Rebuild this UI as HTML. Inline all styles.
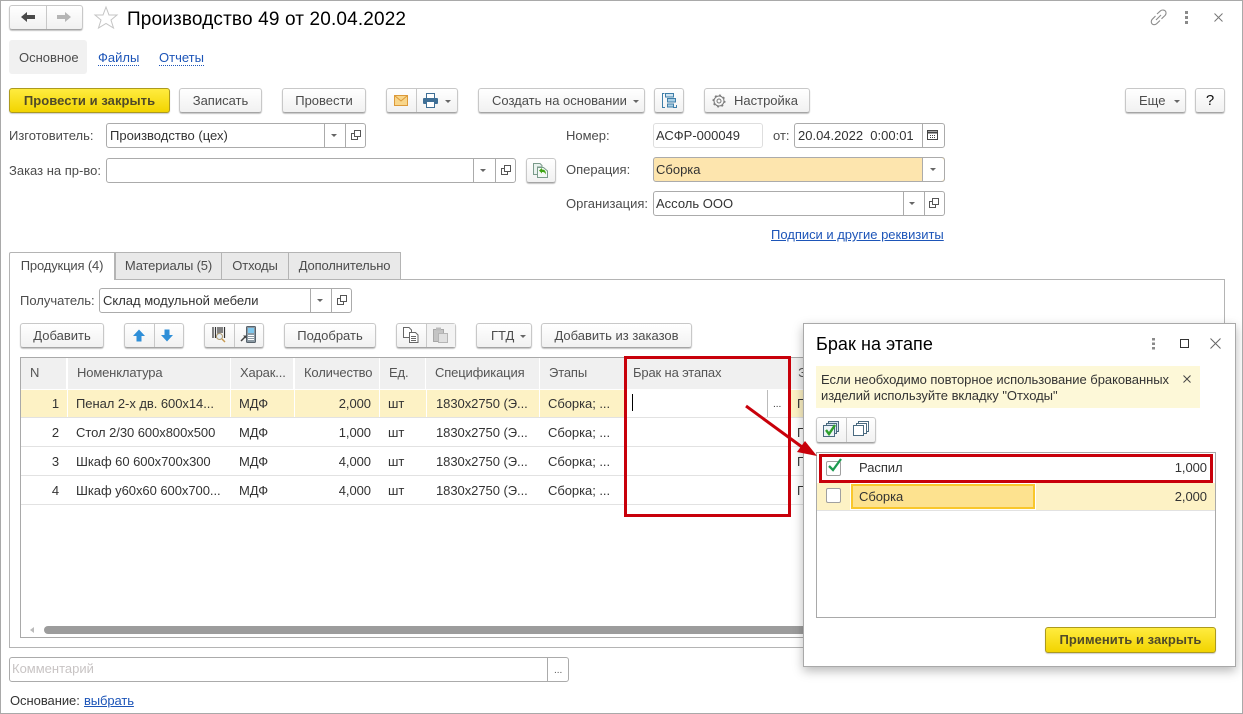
<!DOCTYPE html>
<html lang="ru"><head><meta charset="utf-8"><title>Производство 49</title>
<style>
*{box-sizing:border-box}
html,body{margin:0;padding:0;background:#fff}
#p{position:relative;width:1243px;height:714px;overflow:hidden;background:#fff;border:1px solid #a9a9a9;font:13px "Liberation Sans","Noto Sans CJK SC",sans-serif;color:#4c4c4c}
#r{position:absolute;left:-1px;top:-1px;width:1243px;height:714px}
.t{position:absolute;white-space:nowrap;line-height:16px}
.d{color:#333}
.l{color:#1d55b8;text-decoration:underline}
.ld{color:#1d55b8;border-bottom:1px dotted #1d55b8;line-height:14px}
.b{position:absolute;border:1px solid #c8c8c8;border-bottom-color:#a5a5a5;border-radius:3px;background:linear-gradient(#fff,#f1f1f1);box-shadow:0 1px 1px #c4c4c4;text-align:center;line-height:23px;white-space:nowrap;color:#4c4c4c}
.y{background:linear-gradient(#ffec3f,#f2d400);border-color:#ac9a1e;box-shadow:0 1px 1px #ccc;font-weight:bold;color:#504a28;letter-spacing:.05px}
.f{position:absolute;border:1px solid #ababab;border-radius:3px;background:#fff}
.v{position:absolute;top:0;bottom:0;width:1px;background:#ababab}
.vb{position:absolute;top:0;bottom:0;width:1px;background:#c8c8c8}
.tab{position:absolute;top:252px;height:27px;background:#e9e9e9;border:1px solid #b4b4b4;border-bottom:none;line-height:25px;text-align:center;color:#4c4c4c;letter-spacing:-.15px}
.h{position:absolute;top:358px;height:31px;background:#f0f0f0;line-height:30px;padding-left:9px;white-space:nowrap;color:#555;letter-spacing:-.15px}
.row{position:absolute;height:1px;background:#e2e2e2}
.c{position:absolute;line-height:16px;white-space:nowrap;color:#333;letter-spacing:-.05px}
.ar{position:absolute;width:0;height:0;border-left:3px solid transparent;border-right:3px solid transparent;border-top:3px solid #666}
.e{font-size:10px;line-height:12px}
svg{position:absolute;overflow:visible}
</style></head><body>
<div id="p"><div id="r">

<!-- header -->
<div class="b" style="left:9px;top:5px;width:74px;height:25px"><div class="vb" style="left:36px"></div></div>
<svg style="left:20px;top:11px" width="16" height="12"><path d="M1 6L7 1V4H15V8H7V11Z" fill="#4a4a4a"/></svg>
<svg style="left:56px;top:11px" width="16" height="12"><path d="M15 6L9 1V4H1V8H9V11Z" fill="#b5b5b5"/></svg>
<svg style="left:94px;top:6px" width="24" height="23"><path d="M12 1L15 9H23L17 14L19.500 22L12 17.500L4.500 22L7 14L1 9H9Z" fill="#fff" stroke="#c4c4c4"/></svg>
<div class="t" style="left:127px;top:9px;font-size:19px;letter-spacing:.15px;line-height:22px;color:#000">Производство 49 от 20.04.2022</div>
<svg style="left:1150px;top:9px" width="17" height="17" fill="none" stroke="#8c8c8c" stroke-width="1.100"><path d="M7 5L10.500 1.800C12 .6 14.500 .8 15.500 2.200C16.500 3.600 16 5.500 15 6.500L11.500 9.800"/><path d="M10 11.500L6.500 14.800C5 16 3 16 2 14.800C1 13.600 1 11.500 2.200 10.300L5.500 7"/><path d="M6 11L11 6"/></svg>
<svg style="left:1185px;top:11px" width="4" height="13" fill="#8a8a8a"><rect width="3" height="3"/><rect y="5" width="3" height="3"/><rect y="10" width="3" height="3"/></svg>
<svg style="left:1214px;top:13px" width="9" height="9" stroke="#777" fill="none"><path d="M.5 .5L8.500 8.500M8.500 .5L.5 8.500"/></svg>

<div style="position:absolute;left:9px;top:40px;width:78px;height:34px;background:#f1f1f1;border-radius:3px"></div>
<div class="t" style="left:19px;top:50px">Основное</div>
<div class="t ld" style="left:98px;top:51px">Файлы</div>
<div class="t ld" style="left:159px;top:51px">Отчеты</div>

<!-- command bar -->
<div class="b y" style="left:9px;top:88px;width:161px;height:25px">Провести и закрыть</div>
<div class="b" style="left:179px;top:88px;width:83px;height:25px">Записать</div>
<div class="b" style="left:282px;top:88px;width:84px;height:25px">Провести</div>
<div class="b" style="left:386px;top:88px;width:72px;height:25px"><div class="vb" style="left:29px"></div></div>
<svg style="left:394px;top:95px" width="14" height="11"><rect x=".5" y=".5" width="13" height="10" fill="#f8d68b" stroke="#dc9a3a"/><path d="M.5 .5L7 6L13.500 .5" stroke="#dc9a3a" fill="none"/></svg>
<svg style="left:423px;top:93px" width="15" height="15"><rect x="3.500" y=".5" width="8" height="5" fill="#fff" stroke="#3f6f96"/><rect x="0" y="5" width="15" height="6" rx="1" fill="#3f6f96"/><rect x="3.500" y="8.500" width="8" height="6" fill="#fff" stroke="#3f6f96"/></svg>
<div class="ar" style="left:445px;top:100px"></div>
<div class="b" style="left:478px;top:88px;width:167px;height:25px;text-align:left;padding-left:13px">Создать на основании</div>
<div class="ar" style="left:633px;top:100px"></div>
<div class="b" style="left:654px;top:88px;width:30px;height:25px"></div>
<svg style="left:662px;top:93px" width="15" height="15" fill="none" stroke="#3f7ea8"><path d="M2.500 .5H.5V14.500H3M11 14.500H14.500V12"/><rect x="3.500" y=".5" width="8" height="3.500" fill="#cfe4f1"/><rect x="5.500" y="5.500" width="8" height="3.500" fill="#a8cfe6"/><rect x="5.500" y="11" width="6" height="3" fill="#a8cfe6"/></svg>
<div class="b" style="left:704px;top:88px;width:106px;height:25px;text-align:left;padding-left:29px">Настройка</div>
<svg style="left:712px;top:94px" width="14" height="14" fill="none" stroke="#777"><circle cx="7" cy="7" r="2"/><circle cx="7" cy="7" r="5"/><circle cx="7" cy="7" r="6" stroke-dasharray="2 2.700"/></svg>
<div class="b" style="left:1125px;top:88px;width:61px;height:25px;text-align:left;padding-left:13px">Еще</div>
<div class="ar" style="left:1174px;top:100px"></div>
<div class="b" style="left:1195px;top:88px;width:30px;height:25px;color:#111;font-size:15px">?</div>

<!-- fields -->
<div class="t" style="left:9px;top:128px">Изготовитель:</div>
<div class="f" style="left:106px;top:123px;width:260px;height:25px"><div class="v" style="left:217px"></div><div class="v" style="left:238px"></div></div>
<div class="t d" style="left:110px;top:128px">Производство (цех)</div>
<div class="ar" style="left:331px;top:134px"></div>
<svg style="left:351px;top:130px" width="10" height="10" fill="none" stroke="#555"><rect x="3.500" y=".5" width="6" height="6"/><path d="M3 3.500H.5V9.500H6.500V7"/></svg>

<div class="t" style="left:9px;top:163px">Заказ на пр-во:</div>
<div class="f" style="left:106px;top:158px;width:410px;height:25px"><div class="v" style="left:366px"></div><div class="v" style="left:388px"></div></div>
<div class="ar" style="left:480px;top:169px"></div>
<svg style="left:501px;top:165px" width="10" height="10" fill="none" stroke="#555"><rect x="3.500" y=".5" width="6" height="6"/><path d="M3 3.500H.5V9.500H6.500V7"/></svg>
<div class="b" style="left:526px;top:158px;width:30px;height:25px"></div>
<svg style="left:533px;top:163px" width="16" height="15"><path d="M.5 .5H7L9 2.500V4H4.500V11.500H.5Z" fill="#e9f2ee" stroke="#7a9a8a"/><path d="M4.500 4.500H10.500L14.500 8V14.500H4.500Z" fill="#f3f8f5" stroke="#7a9a8a"/><path d="M6 7.500L9 5V6.500C12 6.500 13 8.500 13 11.500C12 9.500 11 9 9 9V10.500Z" fill="#3fa512"/></svg>

<div class="t" style="left:566px;top:128px">Номер:</div>
<div class="f" style="left:653px;top:123px;width:110px;height:25px;border-color:#dedede"></div>
<div class="t d" style="left:656px;top:128px">АСФР-000049</div>
<div class="t" style="left:773px;top:128px">от:</div>
<div class="f" style="left:794px;top:123px;width:151px;height:25px"><div class="v" style="left:127px"></div></div>
<div class="t d" style="left:798px;top:128px">20.04.2022&nbsp;&nbsp;0:00:01</div>
<svg style="left:927px;top:129px" width="12" height="12" fill="none" stroke="#444"><rect x=".5" y="1.500" width="10" height="9"/><path d="M.5 3.500H10.500" stroke-width="2"/><path d="M3 6.500h1M5 6.500h1M7 6.500h1M3 8.500h1M5 8.500h1M7 8.500h1" /></svg>

<div class="t" style="left:566px;top:162px">Операция:</div>
<div class="f" style="left:653px;top:157px;width:292px;height:25px;background:#fde5ae"><div class="v" style="left:268px;background:#ababab"></div><div style="position:absolute;left:269px;top:0;right:0;bottom:0;background:#fff;border-radius:0 3px 3px 0"></div></div>
<div class="t d" style="left:656px;top:162px">Сборка</div>
<div class="ar" style="left:930px;top:168px"></div>

<div class="t" style="left:566px;top:196px">Организация:</div>
<div class="f" style="left:653px;top:191px;width:292px;height:25px"><div class="v" style="left:249px"></div><div class="v" style="left:270px"></div></div>
<div class="t d" style="left:656px;top:196px">Ассоль ООО</div>
<div class="ar" style="left:909px;top:202px"></div>
<svg style="left:929px;top:198px" width="10" height="10" fill="none" stroke="#555"><rect x="3.500" y=".5" width="6" height="6"/><path d="M3 3.500H.5V9.500H6.500V7"/></svg>
<div class="t l" style="left:771px;top:227px;letter-spacing:-.02px">Подписи и другие реквизиты</div>

<!-- tabs -->
<div style="position:absolute;left:9px;top:279px;width:1216px;height:369px;border:1px solid #b4b4b4;background:#fff"></div>
<div class="tab" style="left:115px;width:107px">Материалы (5)</div>
<div class="tab" style="left:221px;width:68px">Отходы</div>
<div class="tab" style="left:288px;width:113px">Дополнительно</div>
<div class="tab" style="left:9px;width:106px;height:28px;background:#fff;border-radius:2px 0 0 0">Продукция (4)</div>

<div class="t" style="left:20px;top:293px">Получатель:</div>
<div class="f" style="left:99px;top:288px;width:253px;height:25px"><div class="v" style="left:210px"></div><div class="v" style="left:231px"></div></div>
<div class="t d" style="left:103px;top:293px">Склад модульной мебели</div>
<div class="ar" style="left:317px;top:299px"></div>
<svg style="left:337px;top:295px" width="10" height="10" fill="none" stroke="#555"><rect x="3.500" y=".5" width="6" height="6"/><path d="M3 3.500H.5V9.500H6.500V7"/></svg>

<div class="b" style="left:20px;top:323px;width:84px;height:25px">Добавить</div>
<div class="b" style="left:124px;top:323px;width:60px;height:25px"><div class="vb" style="left:29px"></div></div>
<svg style="left:133px;top:329px" width="12" height="13"><path d="M6 .5L12 7H8.500V12.500H3.500V7H0Z" fill="#2f8fd8"/></svg>
<svg style="left:161px;top:329px" width="12" height="13"><path d="M6 12.500L12 6H8.500V.5H3.500V6H0Z" fill="#2f8fd8"/></svg>
<div class="b" style="left:204px;top:323px;width:60px;height:25px"><div class="vb" style="left:29px"></div></div>
<svg style="left:212px;top:327px" width="14" height="16"><path d="M1 0V11M3.500 0V11M6 0V8M8 0V6M10 0V6M12.500 0V11" stroke="#333" stroke-width="1.200"/><circle cx="7.500" cy="9.500" r="3" fill="#e6eef4" stroke="#b09a70"/><path d="M10 12L13 15" stroke="#c89a50" stroke-width="1.500"/></svg>
<svg style="left:240px;top:326px" width="16" height="18"><rect x="6.500" y=".5" width="9" height="16" rx="1" fill="#8c9aa4" stroke="#56626c"/><rect x="8" y="2" width="6" height="5" fill="#7fc8ee"/><path d="M8 9.500h6M8 11.500h6M8 13.500h6" stroke="#fff"/><path d="M1 15L6 10" stroke="#444" stroke-width="1.500"/><path d="M3 9.500H6.500V13Z" fill="#444"/></svg>
<div class="b" style="left:284px;top:323px;width:92px;height:25px">Подобрать</div>
<div class="b" style="left:396px;top:323px;width:60px;height:25px"><div class="vb" style="left:29px"></div><div style="position:absolute;left:30px;top:0;right:0;bottom:0;background:#f3f3f3"></div></div>
<svg style="left:403px;top:327px" width="16" height="16" fill="#fff" stroke="#666"><path d="M.5 .5H6L8.500 3V10.500H.5Z"/><path d="M6.500 5.500H12.500L15 8V15.500H6.500Z"/><path d="M8 9.500H13M8 11.500H13M8 13.500H13" fill="none"/></svg>
<svg style="left:433px;top:327px" width="15" height="16"><rect x=".5" y="2.500" width="10" height="12" fill="#c4c4c4" stroke="#a8a8a8"/><rect x="3" y=".5" width="5" height="3" fill="#bbb"/><rect x="5.500" y="6.500" width="9" height="9" fill="#e0e0e0" stroke="#b5b5b5"/></svg>
<div class="b" style="left:476px;top:323px;width:56px;height:25px;text-align:left;padding-left:14px">ГТД</div>
<div class="ar" style="left:520px;top:335px"></div>
<div class="b" style="left:541px;top:323px;width:151px;height:25px">Добавить из заказов</div>

<!-- table -->
<div style="position:absolute;left:20px;top:357px;width:1194px;height:281px;border:1px solid #a9a9a9;background:#fff"></div>
<div class="h" style="left:21px;width:45px">N</div>
<div class="h" style="left:68px;width:162px">Номенклатура</div>
<div class="h" style="left:231px;width:62px">Харак...</div>
<div class="h" style="left:295px;width:84px">Количество</div>
<div class="h" style="left:380px;width:45px">Ед.</div>
<div class="h" style="left:426px;width:113px">Спецификация</div>
<div class="h" style="left:540px;width:84px">Этапы</div>
<div class="h" style="left:624px;width:164px">Брак на этапах</div>
<div class="h" style="left:789px;width:425px">Этап</div>

<div style="position:absolute;left:21px;top:390px;width:603px;height:27px;background:#fdf2c5"></div>
<div style="position:absolute;left:67px;top:390px;width:1px;height:27px;background:#fff"></div>
<div style="position:absolute;left:230px;top:390px;width:1px;height:27px;background:#fff"></div>
<div style="position:absolute;left:294px;top:390px;width:1px;height:27px;background:#fff"></div>
<div style="position:absolute;left:379px;top:390px;width:1px;height:27px;background:#fff"></div>
<div style="position:absolute;left:426px;top:390px;width:1px;height:27px;background:#fff"></div>
<div style="position:absolute;left:539px;top:390px;width:1px;height:27px;background:#fff"></div>
<div style="position:absolute;left:789px;top:390px;width:20px;height:27px;background:#fdf2c5"></div>
<div class="row" style="left:21px;top:417px;width:800px"></div>
<div class="row" style="left:21px;top:446px;width:800px"></div>
<div class="row" style="left:21px;top:475px;width:800px"></div>
<div class="row" style="left:21px;top:504px;width:800px"></div>
<div style="position:absolute;left:767px;top:390px;width:1px;height:27px;background:#bbb"></div>
<div class="c e" style="left:773px;top:399px">...</div>
<div style="position:absolute;left:632px;top:394px;width:1px;height:17px;background:#000"></div>

<div class="c" style="left:30px;width:29px;text-align:right;top:396px">1</div>
<div class="c" style="left:76px;top:396px">Пенал 2-х дв. 600х14...</div>
<div class="c" style="left:239px;top:396px">МДФ</div>
<div class="c" style="left:295px;width:76px;text-align:right;top:396px">2,000</div>
<div class="c" style="left:388px;top:396px">шт</div>
<div class="c" style="left:436px;top:396px">1830х2750 (Э...</div>
<div class="c" style="left:548px;top:396px">Сборка; ...</div>
<div class="c" style="left:797px;top:396px">П</div>

<div class="c" style="left:30px;width:29px;text-align:right;top:425px">2</div>
<div class="c" style="left:76px;top:425px">Стол 2/30 600х800х500</div>
<div class="c" style="left:239px;top:425px">МДФ</div>
<div class="c" style="left:295px;width:76px;text-align:right;top:425px">1,000</div>
<div class="c" style="left:388px;top:425px">шт</div>
<div class="c" style="left:436px;top:425px">1830х2750 (Э...</div>
<div class="c" style="left:548px;top:425px">Сборка; ...</div>
<div class="c" style="left:797px;top:425px">П</div>

<div class="c" style="left:30px;width:29px;text-align:right;top:454px">3</div>
<div class="c" style="left:76px;top:454px">Шкаф 60 600х700х300</div>
<div class="c" style="left:239px;top:454px">МДФ</div>
<div class="c" style="left:295px;width:76px;text-align:right;top:454px">4,000</div>
<div class="c" style="left:388px;top:454px">шт</div>
<div class="c" style="left:436px;top:454px">1830х2750 (Э...</div>
<div class="c" style="left:548px;top:454px">Сборка; ...</div>
<div class="c" style="left:797px;top:454px">П</div>

<div class="c" style="left:30px;width:29px;text-align:right;top:483px">4</div>
<div class="c" style="left:76px;top:483px">Шкаф у60х60 600х700...</div>
<div class="c" style="left:239px;top:483px">МДФ</div>
<div class="c" style="left:295px;width:76px;text-align:right;top:483px">4,000</div>
<div class="c" style="left:388px;top:483px">шт</div>
<div class="c" style="left:436px;top:483px">1830х2750 (Э...</div>
<div class="c" style="left:548px;top:483px">Сборка; ...</div>
<div class="c" style="left:797px;top:483px">П</div>

<!-- scrollbar -->
<svg style="left:30px;top:627px" width="5" height="7"><path d="M4 0V6L0 3Z" fill="#bbb"/></svg>
<div style="position:absolute;left:44px;top:626px;width:770px;height:8px;border-radius:4px;background:#9c9c9c"></div>

<!-- footer -->
<div class="f" style="left:9px;top:657px;width:560px;height:25px"><div class="v" style="left:537px"></div></div>
<div class="t" style="left:12px;top:661px;color:#c8c4c4">Комментарий</div>
<div class="c e" style="left:554px;top:665px;color:#555">...</div>
<div class="t d" style="left:10px;top:693px;letter-spacing:-.05px">Основание:</div>
<div class="t l" style="left:84px;top:693px;letter-spacing:-.1px">выбрать</div>

<!-- red box -->
<div style="position:absolute;left:624px;top:356px;width:167px;height:161px;border:3px solid #c8000a"></div>

<!-- modal -->
<div style="position:absolute;left:803px;top:323px;width:433px;height:344px;background:#fff;border:1px solid #a9a9a9;box-shadow:0 4px 10px rgba(0,0,0,.28)"></div>
<div class="t" style="left:816px;top:333px;font-size:18px;letter-spacing:.05px;line-height:22px;color:#000">Брак на этапе</div>
<svg style="left:1152px;top:338px" width="4" height="12" fill="#8a8a8a"><rect width="3" height="2.500"/><rect y="4.500" width="3" height="2.500"/><rect y="9" width="3" height="2.500"/></svg>
<svg style="left:1180px;top:339px" width="10" height="10" fill="none" stroke="#333"><rect x=".5" y=".5" width="8" height="8"/></svg>
<svg style="left:1210px;top:338px" width="11" height="11" fill="none" stroke="#666"><path d="M.5 .5L10.500 10.500M10.500 .5L.5 10.500"/></svg>

<div style="position:absolute;left:816px;top:366px;width:384px;height:42px;background:#fdf8d8"></div>
<div class="t d" style="left:821px;top:372px;letter-spacing:-.04px">Если необходимо повторное использование бракованных</div>
<div class="t d" style="left:821px;top:388px;letter-spacing:-.04px">изделий используйте вкладку "Отходы"</div>
<svg style="left:1183px;top:375px" width="8" height="8" fill="none" stroke="#444"><path d="M.5 .5L7.500 7.500M7.500 .5L.5 7.500"/></svg>

<div class="b" style="left:816px;top:417px;width:60px;height:26px"><div class="vb" style="left:29px"></div></div>
<svg style="left:823px;top:421px" width="17" height="16" fill="#d8e6f0" stroke="#4a6a80"><rect x="5.500" y=".5" width="10" height="10"/><rect x="3.500" y="2.500" width="10" height="10"/><rect x=".5" y="4.500" width="11" height="11" fill="#eef4f8"/><path d="M3 9L6 13L12 4" fill="none" stroke="#2ea02e" stroke-width="2.400"/></svg>
<svg style="left:853px;top:421px" width="16" height="16" fill="#fff" stroke="#4a6a80"><rect x="5.500" y=".5" width="10" height="10"/><rect x="3.500" y="2.500" width="10" height="10"/><rect x=".5" y="4.500" width="10" height="10"/></svg>

<div style="position:absolute;left:816px;top:452px;width:400px;height:166px;border:1px solid #a9a9a9;background:#fff"></div>
<div style="position:absolute;left:817px;top:483px;width:398px;height:27px;background:#fdf2c5"></div>
<div style="position:absolute;left:817px;top:510px;width:398px;height:1px;background:#e2e2e2"></div>
<div style="position:absolute;left:851px;top:484px;width:184px;height:25px;background:#fde28f;border:2px solid #f9c72c;outline:1px solid #fff"></div>
<div style="position:absolute;left:826px;top:461px;width:15px;height:15px;border:1px solid #a0a0a0;border-radius:2px;background:#fff"></div>
<svg style="left:828px;top:458px" width="15" height="14" fill="none" stroke="#1d9a50" stroke-width="2.300"><path d="M1 8L5 12L13 1"/></svg>
<div style="position:absolute;left:826px;top:488px;width:15px;height:15px;border:1px solid #a0a0a0;border-radius:2px;background:#fff"></div>
<div class="c" style="left:859px;top:460px">Распил</div>
<div class="c" style="left:1100px;width:107px;text-align:right;top:460px">1,000</div>
<div class="c" style="left:859px;top:489px">Сборка</div>
<div class="c" style="left:1100px;width:107px;text-align:right;top:489px">2,000</div>
<div style="position:absolute;left:819px;top:454px;width:394px;height:29px;border:3px solid #c8000a"></div>

<div class="b y" style="left:1045px;top:627px;width:171px;height:26px">Применить и закрыть</div>

<!-- arrow -->
<svg style="left:0;top:0" width="1243" height="714"><path d="M746 406L802 447" stroke="#c8000a" stroke-width="3" fill="none"/><path d="M817 456L797 452L805 441Z" fill="#c8000a"/></svg>

</div></div>
</body></html>
